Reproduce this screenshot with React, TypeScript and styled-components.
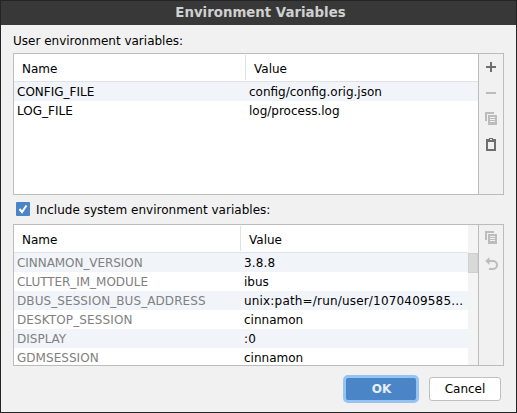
import React from 'react';
import styled, { createGlobalStyle } from 'styled-components';

const GlobalStyle = createGlobalStyle`
  * { box-sizing: border-box; }
  body { margin: 0; }
`;

const Window = styled.div`
  width: 517px;
  height: 413px;
  display: flex;
  flex-direction: column;
  background: #f1f1f1;
  border: 1px solid #242424;
  font: 12px/19px 'DejaVu Sans', sans-serif;
  color: #000;
  overflow: hidden;
`;

const TitleBar = styled.header`
  height: 24px;
  flex: none;
  background: #383838;
  color: #d0d0d0;
  font-size: 13.33px;
  font-weight: bold;
  line-height: 24px;
  text-align: center;
  padding-left: 4px;
`;

const Content = styled.main`
  flex: 1;
  display: flex;
  flex-direction: column;
  padding: 0 12px;
`;

const SectionLabel = styled.div`
  height: 28px;
  padding-top: 7px;
`;

const CheckLabel = styled.div`
  height: 29px;
  display: flex;
  align-items: flex-start;
  gap: 6px;
  padding: 6px 0 0 3px;
  letter-spacing: 0.02px;
`;

const CheckBox = styled.span`
  width: 14px;
  height: 14px;
  margin-top: 1px;
  display: grid;
  place-items: center;
  border-radius: 1px;
  background: #4a86c7;
`;

const Panel = styled.section`
  width: 491px;
  height: 142px;
  flex: none;
  display: flex;
  border: 1px solid #bcbcbc;
  background: #fff;
`;

const Table = styled.div`
  flex: 1;
  min-width: 0;
  overflow: hidden;
`;

const HeaderRow = styled.div<{ $split: number }>`
  height: 28px;
  display: grid;
  grid-template-columns: ${(p) => p.$split}px 1fr;
  border-bottom: 1px solid #dfe3e8;
`;

const HeaderCell = styled.div<{ $divided?: boolean }>`
  height: 25px;
  margin-top: 1px;
  padding-left: 8px;
  line-height: 29px;
  border-right: ${(p) => (p.$divided ? '1px solid #e2e2e2' : 'none')};
`;

const Row = styled.div<{ $split: number }>`
  height: 19px;
  display: grid;
  grid-template-columns: ${(p) => p.$split}px 1fr;
  &:nth-child(even) { background: #f1f5fa; }
`;

const Cell = styled.div<{ $muted?: boolean; $spacing?: number }>`
  padding-left: 3px;
  line-height: 21px;
  height: 19px;
  white-space: nowrap;
  letter-spacing: ${(p) => p.$spacing ?? 0}px;
  color: ${(p) => (p.$muted ? '#808080' : '#000')};
`;

const ScrollTrack = styled.div`
  width: 10px;
  padding-top: 28px;
  background: #f4f4f4;
`;

const ScrollThumb = styled.div`
  height: 20px;
  background: #d9d9d9;
  border: 1px solid #cfcfcf;
`;

const Toolbar = styled.div`
  width: 25px;
  display: flex;
  flex-direction: column;
  align-items: center;
  border-left: 1px solid #bcbcbc;
  background: #f1f1f1;
`;

const ToolButton = styled.span<{ $enabled?: boolean }>`
  width: 24px;
  height: 26px;
  display: grid;
  place-items: center;
  color: ${(p) => (p.$enabled ? '#6e6e6e' : '#bcbcbc')};
`;

const Footer = styled.footer`
  display: flex;
  justify-content: flex-end;
  align-items: center;
  gap: 10px;
  padding: 9px 3px 0 0;
`;

const Button = styled.button<{ $primary?: boolean }>`
  width: ${(p) => (p.$primary ? 76 : 72)}px;
  height: ${(p) => (p.$primary ? 28 : 24)}px;
  padding: ${(p) => (p.$primary ? '0 0 0 1px' : '0')};
  font: inherit;
  font-weight: ${(p) => (p.$primary ? 'bold' : 'normal')};
  color: ${(p) => (p.$primary ? '#e8eef5' : '#000')};
  background: ${(p) => (p.$primary ? '#4a86c7' : '#fff')};
  border: ${(p) => (p.$primary ? '3px solid #97c3f3' : '1px solid #bfbfbf')};
  border-radius: ${(p) => (p.$primary ? 5 : 3)}px;
`;

const icons = {
  add: <svg width="16" height="16"><path d="M7 3h2v4h4v2H9v4H7V9H3V7h4z" fill="currentColor" /></svg>,
  remove: <svg width="16" height="16"><path d="M3 7h10v2H3z" fill="currentColor" /></svg>,
  copy: (
    <svg width="16" height="16">
      <path d="M2 1h9v2H4v7H2z" fill="currentColor" />
      <path fillRule="evenodd" d="M5 4h9v10H5zM7 6v1h5V6zM7 8v1h5V8zM7 10v1h5v-1z" fill="currentColor" />
    </svg>
  ),
  paste: (
    <svg width="16" height="16">
      <path fillRule="evenodd" d="M3 2h3V1h4v1h3v12H3zM5 5v7h6V5zM7 2v1h2V2z" fill="currentColor" />
    </svg>
  ),
  revert: (
    <svg width="16" height="16">
      <path d="M5 5h5a4 4 0 0 1 0 8H6" fill="none" stroke="currentColor" strokeWidth="2" />
      <path d="M6.5 1v8l-4.2-4z" fill="currentColor" />
    </svg>
  ),
};

type IconName = keyof typeof icons;

const Tools = ({ items }: { items: [IconName, boolean][] }) => (
  <Toolbar>
    {items.map(([name, enabled]) => (
      <ToolButton key={name} $enabled={enabled}>{icons[name]}</ToolButton>
    ))}
  </Toolbar>
);

interface Variable {
  name: string;
  value: string;
  tracking?: number;
}

const VariableTable = ({ split, rows, muted }: { split: number; rows: Variable[]; muted?: boolean }) => (
  <Table>
    <HeaderRow $split={split}>
      <HeaderCell $divided>Name</HeaderCell>
      <HeaderCell>Value</HeaderCell>
    </HeaderRow>
    {rows.map(({ name, value, tracking }) => (
      <Row key={name} $split={split}>
        <Cell $muted={muted} $spacing={tracking}>{name}</Cell>
        <Cell $spacing={/\d/.test(value) ? 0.18 : 0}>{value}</Cell>
      </Row>
    ))}
  </Table>
);

const userVariables: Variable[] = [
  { name: 'CONFIG_FILE', value: 'config/config.orig.json' },
  { name: 'LOG_FILE', value: 'log/process.log' },
];

const systemVariables: Variable[] = [
  { name: 'CINNAMON_VERSION', value: '3.8.8', tracking: -0.06 },
  { name: 'CLUTTER_IM_MODULE', value: 'ibus', tracking: -0.04 },
  { name: 'DBUS_SESSION_BUS_ADDRESS', value: 'unix:path=/run/user/1070409585...', tracking: 0.08 },
  { name: 'DESKTOP_SESSION', value: 'cinnamon', tracking: 0.12 },
  { name: 'DISPLAY', value: ':0' },
  { name: 'GDMSESSION', value: 'cinnamon', tracking: 0.04 },
];

export default function App() {
  return (
    <>
      <GlobalStyle />
      <Window>
        <TitleBar>Environment Variables</TitleBar>
        <Content>
          <SectionLabel>User environment variables:</SectionLabel>
          <Panel>
            <VariableTable split={232} rows={userVariables} />
            <Tools items={[['add', true], ['remove', false], ['copy', false], ['paste', true]]} />
          </Panel>
          <CheckLabel>
            <CheckBox>
              <svg width="10" height="10"><path d="M1.5 5l2.5 3 4.5-6.5" fill="none" stroke="#fff" strokeWidth="2" /></svg>
            </CheckBox>
            Include system environment variables:
          </CheckLabel>
          <Panel>
            <VariableTable split={227} rows={systemVariables} muted />
            <ScrollTrack><ScrollThumb /></ScrollTrack>
            <Tools items={[['copy', false], ['revert', false]]} />
          </Panel>
          <Footer>
            <Button $primary>OK</Button>
            <Button>Cancel</Button>
          </Footer>
        </Content>
      </Window>
    </>
  );
}
